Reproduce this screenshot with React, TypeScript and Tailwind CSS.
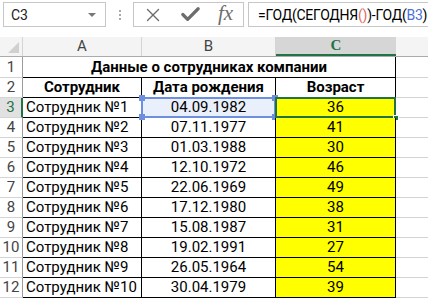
import { X, Check } from "lucide-react";

const ROWS: [string, string, string][] = [
  ["Сотрудник №1", "04.09.1982", "36"],
  ["Сотрудник №2", "07.11.1977", "41"],
  ["Сотрудник №3", "01.03.1988", "30"],
  ["Сотрудник №4", "12.10.1972", "46"],
  ["Сотрудник №5", "22.06.1969", "49"],
  ["Сотрудник №6", "17.12.1980", "38"],
  ["Сотрудник №7", "15.08.1987", "31"],
  ["Сотрудник №8", "19.02.1991", "27"],
  ["Сотрудник №9", "26.05.1964", "54"],
  ["Сотрудник №10", "30.04.1979", "39"],
];

const cellFont = { fontFamily: "Roboto, 'Noto Sans', sans-serif" };

function RowHead({ n, active }: { n: number; active?: boolean }) {
  return (
    <div
      className={`w-[23px] shrink-0 h-full flex items-center justify-center border-b border-[#d4d4d4] ${
        active
          ? "bg-[#e1e1e1] text-[#217346] border-r-2 border-r-[#217346]"
          : "bg-white text-[#444] border-r border-r-[#9b9b9b]"
      }`}
    >
      {n}
    </div>
  );
}

export default function App() {
  return (
    <div
      className="w-[428px] h-[299px] bg-white overflow-hidden text-[15px] leading-none text-black"
      style={cellFont}
    >
      {/* Formula bar */}
      <div className="flex items-center h-[27px] pt-[2px]">
        <div className="ml-[3px] w-[103px] h-[25px] border border-[#c6c6c6] flex items-center justify-between pl-[7px] pr-[9px]">
          <span className="text-[#222] text-[14px]">C3</span>
          <span className="w-0 h-0 border-l-[4px] border-r-[4px] border-t-[4px] border-l-transparent border-r-transparent border-t-[#777]" />
        </div>
        <div className="w-[27px] flex flex-col items-center gap-[2px]">
          <span className="w-[2px] h-[2px] bg-[#aaa]" />
          <span className="w-[2px] h-[2px] bg-[#aaa]" />
          <span className="w-[2px] h-[2px] bg-[#aaa]" />
        </div>
        <div className="w-[111px] h-[25px] border border-[#c6c6c6] flex items-center pl-[8px]">
          <X size={22} strokeWidth={1.5} color="#6d6d6d" />
          <Check size={23} strokeWidth={3.4} color="#6d6d6d" className="ml-[15px]" />
          <span
            className="italic text-[#6d6d6d] text-[21px] ml-[16px] -mt-[2px]"
            style={{ fontFamily: "'Liberation Serif', serif" }}
          >
            fx
          </span>
        </div>
        <div
          className="ml-[4px] flex-1 h-[25px] border border-r-0 border-[#c6c6c6] flex items-center pl-[9px] text-[14px] whitespace-nowrap overflow-hidden"
          style={{ fontFamily: "Roboto, 'Noto Sans', sans-serif", letterSpacing: "-0.25px" }}
        >
          <span>=ГОД(СЕГОДНЯ</span>
          <span className="text-[#e06c5d]">()</span>
          <span>)-ГОД(</span>
          <span className="text-[#4a6fd8]">B3</span>
          <span>)</span>
        </div>
      </div>

      <div className="h-[10px]" />

      {/* Column headers */}
      <div className="flex h-[20px] border-b border-[#ababab] text-[#444]">
        <div className="w-[23px] shrink-0 h-full bg-[#f4f4f4] border-r border-[#d4d4d4] flex items-end justify-end p-[3px]">
          <span
            className="w-0 h-0"
            style={{ borderBottom: "11px solid #d0d0d0", borderLeft: "11px solid transparent" }}
          />
        </div>
        <div className="w-[119px] shrink-0 bg-[#f4f4f4] border-r border-[#d4d4d4] flex items-center justify-center">A</div>
        <div className="w-[134px] shrink-0 bg-[#f4f4f4] border-r border-[#d4d4d4] flex items-center justify-center">B</div>
        <div
          className="w-[120px] shrink-0 bg-[#d6d6d6] border-b-2 border-[#217346] text-[#217346] font-bold flex items-center justify-center"
          style={{ fontFamily: "'Liberation Serif', serif" }}
        >
          C
        </div>
        <div className="flex-1 bg-[#f4f4f4]" />
      </div>

      {/* Row 1: title */}
      <div className="flex h-[21px]">
        <RowHead n={1} />
        <div className="w-[373px] shrink-0 border-b border-r border-black flex items-center justify-center font-bold">
          Данные о сотрудниках компании
        </div>
        <div className="flex-1 border-b border-[#d4d4d4]" />
      </div>

      {/* Row 2: headings */}
      <div className="flex h-[20px]">
        <RowHead n={2} />
        <div className="w-[119px] shrink-0 border-b border-r border-black flex items-center justify-center font-bold">
          Сотрудник
        </div>
        <div className="w-[134px] shrink-0 border-b border-r border-black flex items-center justify-center font-bold">
          Дата рождения
        </div>
        <div className="w-[120px] shrink-0 border-b border-r border-black flex items-center justify-center font-bold">
          Возраст
        </div>
        <div className="flex-1 border-b border-[#d4d4d4]" />
      </div>

      {ROWS.map(([name, date, age], i) => {
        const active = i === 0;
        return (
          <div key={name} className="flex h-[20px]">
            <RowHead n={i + 3} active={active} />
            <div className="w-[119px] shrink-0 border-b border-r border-black flex items-center pl-[3px]">
              {name}
            </div>
            <div
              className={`relative w-[134px] shrink-0 border-b border-r border-black flex items-center justify-center ${
                active ? "bg-[#eaf0fb]" : ""
              }`}
            >
              {date}
              {active && (
                <div className="absolute -left-[1px] -top-[1px] -right-[1px] -bottom-[1px] border-2 border-[#6d8fe0]">
                  <span className="absolute -left-[4px] -top-[4px] w-[6px] h-[6px] bg-[#6d8fe0]" />
                  <span className="absolute -right-[4px] -top-[4px] w-[6px] h-[6px] bg-[#6d8fe0]" />
                  <span className="absolute -left-[4px] -bottom-[4px] w-[6px] h-[6px] bg-[#6d8fe0]" />
                  <span className="absolute -right-[4px] -bottom-[4px] w-[6px] h-[6px] bg-[#6d8fe0]" />
                </div>
              )}
            </div>
            <div className="relative w-[120px] shrink-0 border-b border-r border-black bg-[#ffff00] flex items-center justify-center">
              {age}
              {active && (
                <div className="absolute -left-[1px] -top-[1px] -right-[1px] -bottom-[1px] border-2 border-[#217346]">
                  <span className="absolute -right-[5px] -bottom-[5px] w-[6px] h-[6px] bg-[#217346] border border-white" />
                </div>
              )}
            </div>
            <div className="flex-1 border-b border-[#d4d4d4]" />
          </div>
        );
      })}
    </div>
  );
}
